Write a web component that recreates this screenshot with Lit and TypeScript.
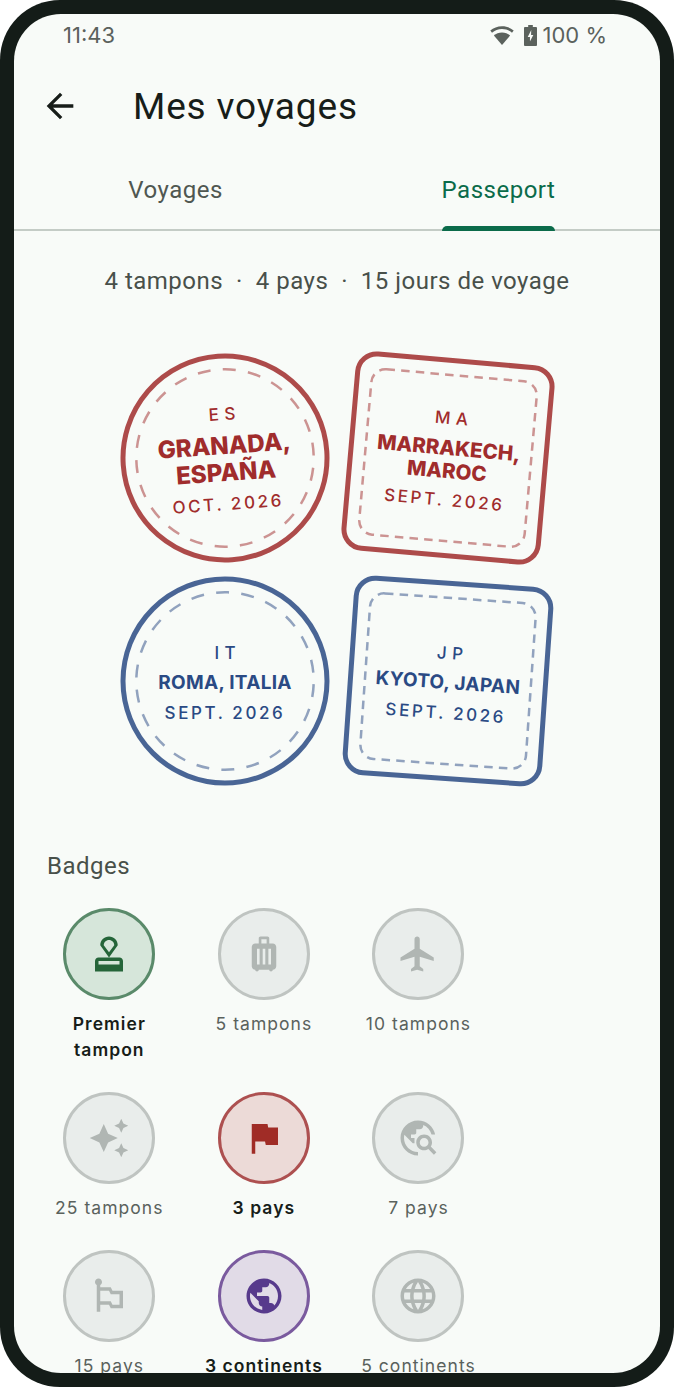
import { LitElement, html, css, svg } from "lit";
import { customElement } from "lit/decorators.js";

const ICONS: Record<string, string> = {
  approval: "M4 16v6h16v-6c0-1.1-.9-2-2-2H6c-1.1 0-2 .9-2 2zm14 2H6v-2h12v2zM12 2C9.24 2 7 4.24 7 7l5 7 5-7c0-2.76-2.24-5-5-5zm0 9L9 7c0-1.66 1.34-3 3-3s3 1.34 3 3l-3 4z",
  luggage: "M17 6h-2V3c0-.55-.45-1-1-1h-4c-.55 0-1 .45-1 1v3H7c-1.1 0-2 .9-2 2v11c0 1.1.9 2 2 2 0 .55.45 1 1 1s1-.45 1-1h6c0 .55.45 1 1 1s1-.45 1-1c1.1 0 2-.9 2-2V8c0-1.1-.9-2-2-2zM9.5 18H8V9h1.5v9zm3.25 0h-1.5V9h1.5v9zm.75-12h-3V3.5h3V6zM16 18h-1.5V9H16v9z",
  flight: "M21 16v-2l-8-5V3.5c0-.83-.67-1.5-1.5-1.5S10 2.67 10 3.5V9l-8 5v2l8-2.5V19l-2 1.5V22l3.5-1 3.5 1v-1.5L13 19v-5.5l8 2.5z",
  sparkle: "M19 9l1.25-2.75L23 5l-2.75-1.25L19 1l-1.25 2.75L15 5l2.75 1.25L19 9zm-7.5.5L9 4 6.5 9.5 1 12l5.5 2.5L9 20l2.5-5.5L17 12l-5.5-2.5zM19 15l-1.25 2.75L15 19l2.75 1.25L19 23l1.25-2.75L23 19l-2.75-1.25L19 15z",
  flag: "M14.4 6L14 4H5v17h2v-7h5.6l.4 2h7V6z",
  explore: "M19.3 16.9c.4-.7.7-1.5.7-2.4 0-2.5-2-4.5-4.5-4.5S11 12 11 14.5s2 4.5 4.5 4.5c.9 0 1.7-.3 2.4-.7l3.2 3.2 1.4-1.4-3.2-3.2zm-3.8.1c-1.4 0-2.5-1.1-2.5-2.5s1.1-2.5 2.5-2.5 2.5 1.1 2.5 2.5-1.1 2.5-2.5 2.5zM12 20v2C6.48 22 2 17.52 2 12S6.48 2 12 2c4.84 0 8.87 3.44 9.8 8h-2.07c-.64-2.46-2.4-4.47-4.73-5.41V5c0 1.1-.9 2-2 2h-2v2c0 .55-.45 1-1 1H8v2h2v3H9l-4.79-4.79C4.08 10.79 4 11.38 4 12c0 4.41 3.59 8 8 8z",
  flags: "M14 9l-1-2H7V5.72c.6-.34 1-.98 1-1.72 0-1.1-.9-2-2-2s-2 .9-2 2c0 .74.4 1.38 1 1.72V21h2v-4h5l1 2h7V9h-6zm4 8h-4l-1-2H7V9h5l1 2h5v6z",
  public: "M12 2C6.48 2 2 6.48 2 12s4.48 10 10 10 10-4.48 10-10S17.52 2 12 2zm-1 17.93c-3.95-.49-7-3.85-7-7.93 0-.62.08-1.21.21-1.79L9 15v1c0 1.1.9 2 2 2v1.93zm6.9-2.54c-.26-.81-1-1.39-1.9-1.39h-1v-3c0-.55-.45-1-1-1H8v-2h2c.55 0 1-.45 1-1V7h2c1.1 0 2-.9 2-2v-.41c2.93 1.19 5 4.06 5 7.41 0 2.08-.8 3.97-2.1 5.39z",
  language: "M11.99 2C6.47 2 2 6.48 2 12s4.47 10 9.99 10C17.52 22 22 17.52 22 12S17.52 2 11.99 2zm6.93 6h-2.95c-.32-1.25-.78-2.45-1.38-3.56 1.84.63 3.37 1.91 4.33 3.56zM12 4.04c.83 1.2 1.48 2.53 1.91 3.96h-3.82c.43-1.43 1.08-2.76 1.91-3.96zM4.26 14C4.1 13.36 4 12.69 4 12s.1-1.36.26-2h3.38c-.08.66-.14 1.32-.14 2 0 .68.06 1.34.14 2H4.26zm.82 2h2.95c.32 1.25.78 2.45 1.38 3.56-1.84-.63-3.37-1.9-4.33-3.56zm2.95-8H5.08c.96-1.66 2.49-2.93 4.33-3.56C8.81 5.55 8.35 6.75 8.03 8zM12 19.96c-.83-1.2-1.48-2.53-1.91-3.96h3.82c-.43 1.43-1.08 2.76-1.91 3.96zM14.34 14H9.66c-.09-.66-.16-1.32-.16-2 0-.68.07-1.35.16-2h4.68c.09.65.16 1.32.16 2 0 .68-.07 1.34-.16 2zm.25 5.56c.6-1.11 1.06-2.31 1.38-3.56h2.95c-.96 1.65-2.49 2.93-4.33 3.56zM16.36 14c.08-.66.14-1.32.14-2 0-.68-.06-1.34-.14-2h3.38c.16.64.26 1.31.26 2s-.1 1.36-.26 2h-3.38z",
};

interface Stamp { code: string; city: string[]; date: string; round: boolean; tone: string; rot: number; size: number; dash: number; }
const STAMPS: Stamp[] = [
  { code: "ES", city: ["GRANADA,", "ESPAÑA"], date: "OCT. 2026", round: true, tone: "red", rot: -4, size: 24.2, dash: -6 },
  { code: "MA", city: ["MARRAKECH,", "MAROC"], date: "SEPT. 2026", round: false, tone: "red", rot: 5, size: 20.5, dash: 0 },
  { code: "IT", city: ["ROMA, ITALIA"], date: "SEPT. 2026", round: true, tone: "blue", rot: 0, size: 19, dash: 2 },
  { code: "JP", city: ["KYOTO, JAPAN"], date: "SEPT. 2026", round: false, tone: "blue", rot: 4, size: 19, dash: 0 },
];

interface Badge { label: string[]; icon: string; tone: string; }
const BADGES: Badge[] = [
  { label: ["Premier", "tampon"], icon: "approval", tone: "green" },
  { label: ["5 tampons"], icon: "luggage", tone: "off" },
  { label: ["10 tampons"], icon: "flight", tone: "off" },
  { label: ["25 tampons"], icon: "sparkle", tone: "off" },
  { label: ["3 pays"], icon: "flag", tone: "crimson" },
  { label: ["7 pays"], icon: "explore", tone: "off" },
  { label: ["15 pays"], icon: "flags", tone: "off" },
  { label: ["3 continents"], icon: "public", tone: "purple" },
  { label: ["5 continents"], icon: "language", tone: "off" },
];

@customElement("app-root")
export class AppRoot extends LitElement {
  static styles = css`
    :host { display: block; width: 674px; height: 1387px; background: #fff; }
    .frame { box-sizing: border-box; width: 674px; height: 1387px; padding: 14px; background: #141c18; border-radius: 60px; }
    .screen { height: 100%; border-radius: 47px; background: #f8fbf8; overflow: hidden; display: flex; flex-direction: column; font-family: Roboto, sans-serif; color: #171d19; }
    .status { height: 42px; flex: none; display: flex; align-items: center; padding: 0 53px 0 49px; font-family: Inter, sans-serif; font-size: 22px; color: #5b625d; }
    .status .right { margin-left: auto; display: flex; align-items: center; }
    .status .wifi { width: 24px; height: 24px; margin-right: 10px; }
    .status .bat { width: 13px; height: 21px; margin-right: 6px; }
    .appbar { height: 100px; flex: none; display: flex; align-items: center; padding-left: 26px; }
    .appbar svg { width: 40px; height: 40px; fill: #171d19; flex: none; }
    .appbar h1 { margin: 0 0 0 53px; font-size: 37px; font-weight: 400; letter-spacing: 0.85px; }
    .tabs { height: 75px; flex: none; display: grid; grid-template-columns: 1fr 1fr; border-bottom: 2px solid #c4ccc6; box-sizing: border-box; }
    .tab { display: flex; align-items: flex-start; justify-content: center; padding-top: 19px; font-size: 24px; font-weight: 400; line-height: 30px; letter-spacing: 0.5px; color: #4f5751; }
    .tab span { position: relative; height: 56px; display: block; }
    .tab.on { color: #0b6b4a; }
    .tab.on span::after { content: ""; position: absolute; left: 0; right: 0; bottom: 0; height: 5px; background: #0b6b4a; border-radius: 5px 5px 0 0; }
    .summary { margin-top: 35px; text-align: center; font-size: 24px; line-height: 30px; color: #48504a; letter-spacing: 0.5px; white-space: pre; }
    .stamps { margin: 58px 1px 0 0; display: grid; grid-template-columns: 208px 208px; grid-auto-rows: 208px; gap: 15px; justify-content: center; font-family: Inter, sans-serif; }
    .stamp { box-sizing: border-box; position: relative; display: flex; flex-direction: column; align-items: center; justify-content: center; text-align: center; padding-top: 6px; }
    .stamp.two { padding-top: 4px; }
    .stamp svg { position: absolute; left: 0; top: 0; width: 208px; height: 208px; overflow: visible; fill: none; }
    .stamp.red { color: #a02c2c; }
    .stamp.blue { color: #2a4a84; }
    .stamp .ring { stroke: currentColor; stroke-opacity: 0.85; stroke-width: 5; }
    .stamp .dash { stroke: currentColor; stroke-opacity: 0.5; stroke-width: 2.5; }
    .code { font-size: 17px; font-weight: 500; line-height: 20px; letter-spacing: 5.5px; margin-right: -5.5px; }
    .city { font-weight: 700; letter-spacing: 0.3px; margin: 9px 0 8px; }
    .two .city { margin-bottom: 6px; font-weight: 800; letter-spacing: 0; }
    .date { font-size: 17px; font-weight: 500; line-height: 24px; letter-spacing: 2.6px; }
    h2 { margin: 66px 0 0 33px; font-size: 24px; line-height: 30px; font-weight: 400; letter-spacing: 0.5px; color: #48504a; }
    .badges { margin: 27px 0 0 18px; display: grid; grid-template-columns: repeat(3, 154.6px); row-gap: 29px; font-family: Inter, sans-serif; flex: none; }
    .badge { display: flex; flex-direction: column; align-items: center; text-align: center; }
    .disc { box-sizing: border-box; width: 92px; height: 92px; border-radius: 50%; border: 3px solid; display: flex; align-items: center; justify-content: center; }
    .disc svg { width: 42px; height: 42px; fill: currentColor; }
    .off .disc { background: #e9edeb; border-color: #bfc4c1; color: #b0b6b3; }
    .green .disc { background: #d6e6da; border-color: #5a8a6a; color: #256539; }
    .crimson .disc { background: #ecdad7; border-color: #ad5050; color: #a02c26; }
    .purple .disc { background: #e1dbe7; border-color: #7a5a9e; color: #573a8c; }
    .label { margin-top: 11px; font-size: 17.5px; line-height: 26px; letter-spacing: 1.05px; color: #5a625d; font-weight: 400; white-space: nowrap; }
    .badge:not(.off) .label { color: #171d19; font-weight: 600; }
  `;

  private stamp(s: Stamp) {
    const shape = s.round
      ? svg`<circle class="ring" cx="104" cy="104" r="102"></circle>
            <circle class="dash" cx="104" cy="104" r="88.700" stroke-dasharray="13 12.330" transform="rotate(${s.dash} 104 104)"></circle>`
      : svg`<rect class="ring" x="6.500" y="6.500" width="195" height="195" rx="19"></rect>
            <rect class="dash" x="21" y="21" width="166" height="166" rx="14" stroke-dasharray="8.500 6.200"></rect>`;
    return html`<div class="stamp ${s.tone} ${s.city.length > 1 ? "two" : ""}" style="transform: rotate(${s.rot}deg)">
      <svg viewBox="0 0 208 208">${shape}</svg>
      <div class="code">${s.code}</div>
      <div class="city" style="font-size: ${s.size}px; line-height: ${s.size + 2}px">${s.city.map((l) => html`<div>${l}</div>`)}</div>
      <div class="date">${s.date}</div>
    </div>`;
  }

  render() {
    return html`<div class="frame"><div class="screen">
      <div class="status">
        <span>11:43</span>
        <div class="right">
          <svg class="wifi" viewBox="0 0 24 24" fill="#5b625d"><path d="M12 22 3.900 12.600C6 10.600 8.900 9.400 12 9.400s6 1.200 8.100 3.200z"/><path d="M.3 7.600C3.400 4.800 7.500 3.200 12 3.200s8.600 1.600 11.700 4.400L22 9.800C19.300 7.400 15.800 6 12 6S4.700 7.400 2 9.800z"/></svg>
          <svg class="bat" viewBox="0 0 14 21" preserveAspectRatio="none"><path fill="#5b625d" d="M4.500 0h5v2H13a1 1 0 0 1 1 1v17a1 1 0 0 1-1 1H1a1 1 0 0 1-1-1V3a1 1 0 0 1 1-1h3.500z"/><path fill="#f8fbf8" d="M7.800 5 4 12h2.400v4.500L10 10H7.600z"/></svg>
          <span>100 %</span>
        </div>
      </div>
      <div class="appbar">
        <svg viewBox="0 0 24 24"><path d="M20 11H7.830l5.590-5.590L12 4l-8 8 8 8 1.410-1.410L7.830 13H20v-2z"/></svg>
        <h1>Mes voyages</h1>
      </div>
      <div class="tabs">
        <div class="tab"><span>Voyages</span></div>
        <div class="tab on"><span>Passeport</span></div>
      </div>
      <div class="summary">4 tampons  ·  4 pays  ·  15 jours de voyage</div>
      <div class="stamps">${STAMPS.map((s) => this.stamp(s))}</div>
      <h2>Badges</h2>
      <div class="badges">
        ${BADGES.map((b) => html`<div class="badge ${b.tone}">
          <div class="disc"><svg viewBox="0 0 24 24"><path d=${ICONS[b.icon]}></path></svg></div>
          <div class="label">${b.label.map((l) => html`<div>${l}</div>`)}</div>
        </div>`)}
      </div>
    </div></div>`;
  }
}
